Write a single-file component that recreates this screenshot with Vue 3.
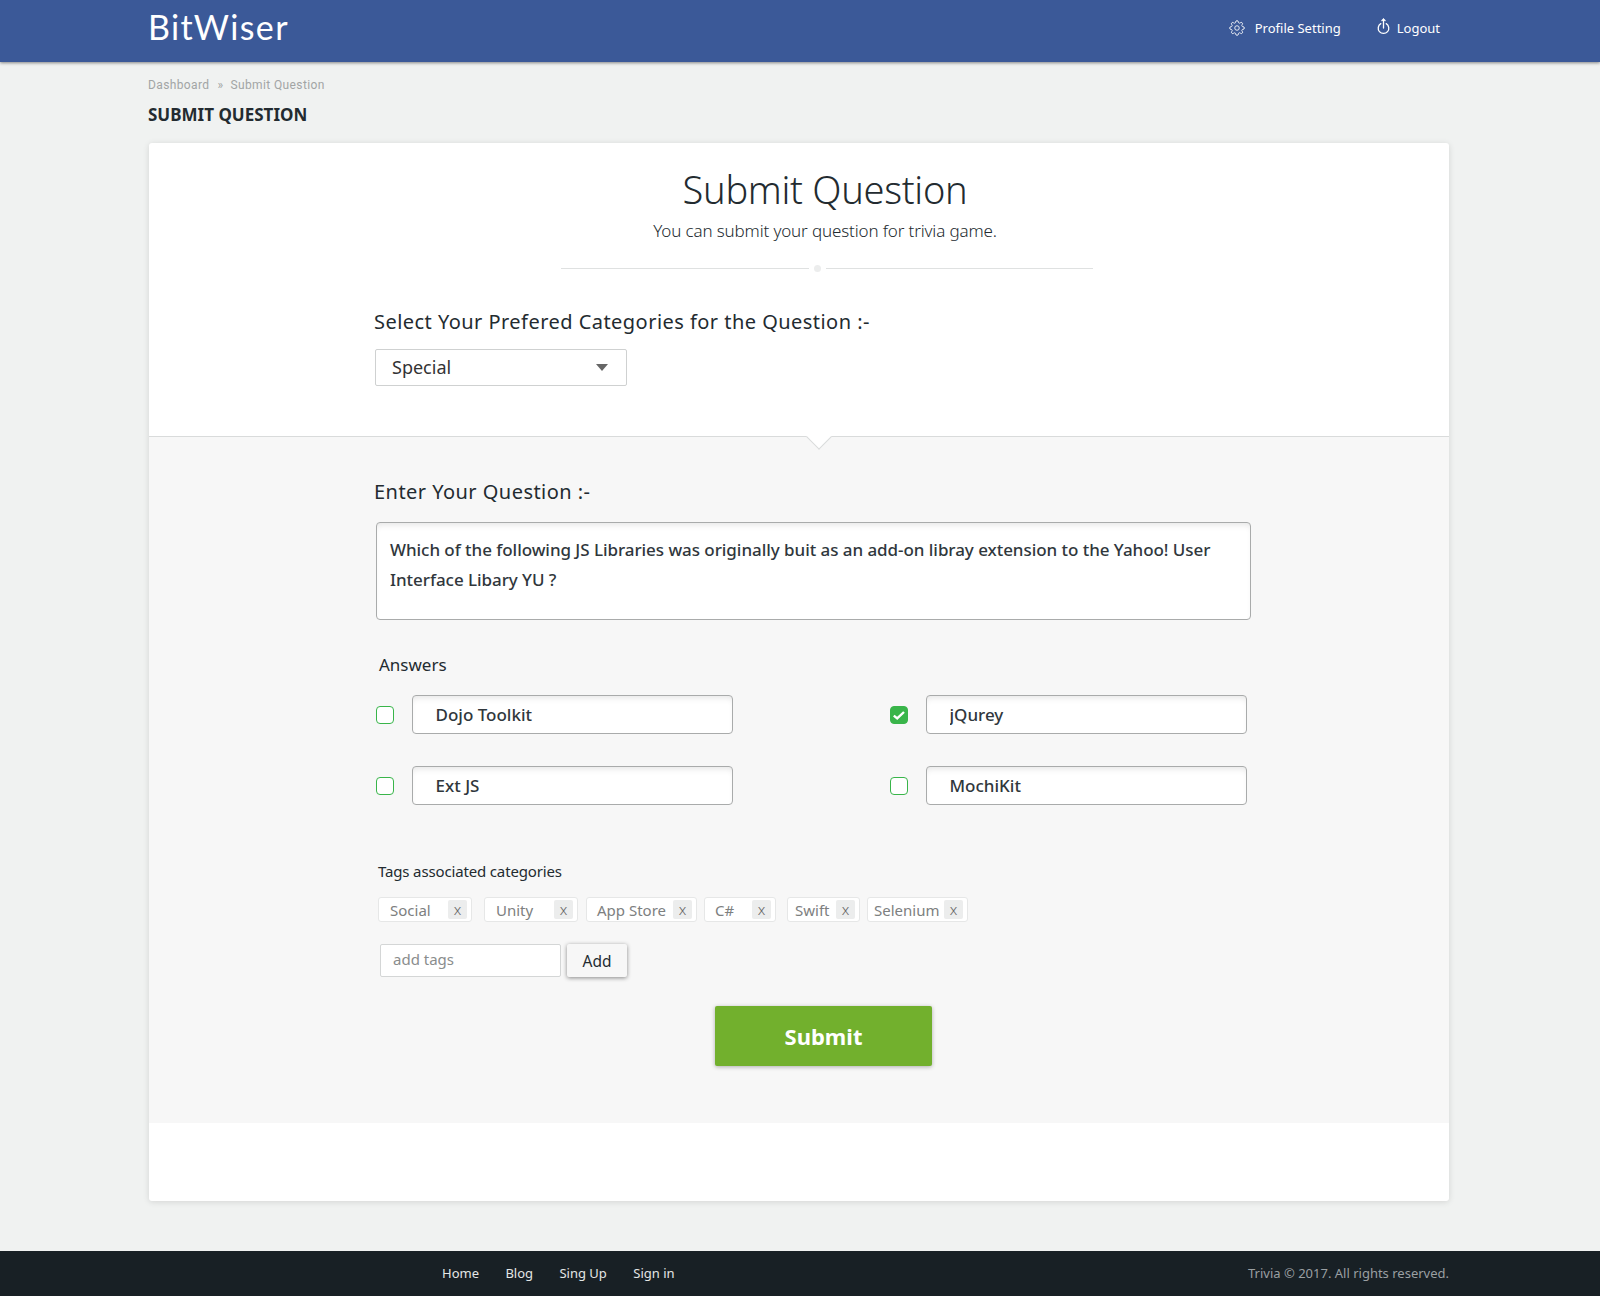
<template>
  <div class="page">
    <header class="topbar">
      <div class="wrap topbar-in">
        <div class="logo">BitWiser</div>
        <nav class="top-nav">
          <a class="nav-item">
            <svg class="gear" viewBox="0 0 24 24" fill="none" stroke="#fff" stroke-width="1.3">
              <circle cx="12" cy="12" r="3.4" />
              <path d="M19.4 15a1.65 1.65 0 0 0 .33 1.82l.06.06a2 2 0 0 1 0 2.83 2 2 0 0 1-2.83 0l-.06-.06a1.65 1.65 0 0 0-1.82-.33 1.65 1.65 0 0 0-1 1.51V21a2 2 0 0 1-2 2 2 2 0 0 1-2-2v-.09A1.65 1.65 0 0 0 9 19.4a1.65 1.65 0 0 0-1.82.33l-.06.06a2 2 0 0 1-2.83 0 2 2 0 0 1 0-2.83l.06-.06a1.65 1.65 0 0 0 .33-1.82 1.65 1.65 0 0 0-1.51-1H3a2 2 0 0 1-2-2 2 2 0 0 1 2-2h.09A1.65 1.65 0 0 0 4.6 9a1.65 1.65 0 0 0-.33-1.82l-.06-.06a2 2 0 0 1 0-2.83 2 2 0 0 1 2.83 0l.06.06a1.65 1.65 0 0 0 1.82.33H9a1.65 1.65 0 0 0 1-1.51V3a2 2 0 0 1 2-2 2 2 0 0 1 2 2v.09a1.65 1.65 0 0 0 1 1.51 1.65 1.65 0 0 0 1.82-.33l.06-.06a2 2 0 0 1 2.83 0 2 2 0 0 1 0 2.83l-.06.06a1.65 1.65 0 0 0-.33 1.82V9a1.65 1.65 0 0 0 1.51 1H21a2 2 0 0 1 2 2 2 2 0 0 1-2 2h-.09a1.65 1.65 0 0 0-1.51 1z" />
            </svg>
            Profile Setting
          </a>
          <a class="nav-item">
            <svg class="power" viewBox="0 0 13 17" fill="none" stroke="#fff" stroke-width="1.3" stroke-linecap="round">
              <path d="M3.8 5.6a5.3 5.3 0 1 0 5.4 0" />
              <path d="M6.5 10V1M4.9 2.6 6.5 1l1.6 1.6" />
            </svg>
            Logout
          </a>
        </nav>
      </div>
    </header>

    <main class="wrap content">
      <div class="crumbs">
        <span>Dashboard</span>
        <span class="sep">»</span>
        <span>Submit Question</span>
      </div>
      <h2 class="page-title">SUBMIT QUESTION</h2>

      <section class="card">
        <div class="card-top">
          <h1 class="big-title">Submit Question</h1>
          <p class="subtitle">You can submit your question for trivia game.</p>
          <div class="divider"><i></i><b></b><i></i></div>

          <div class="form-col">
            <h3 class="label">Select Your Prefered Categories for the Question :-</h3>
            <div class="select-box">
              <select class="select">
                <option>Special</option>
              </select>
            </div>
          </div>
        </div>

        <div class="card-form">
          <span class="notch"></span>
          <div class="form-col">
            <h3 class="label">Enter Your Question :-</h3>
            <textarea
              class="question"
              rows="2"
              value="Which of the following JS Libraries was originally buit as an add-on libray extension to the Yahoo! User Interface Libary YU ?"
            ></textarea>

            <div class="answers-title">Answers</div>
            <div class="answers">
              <div v-for="a in answers" :key="a.text" class="answer">
                <span class="check" :class="{ on: a.right }">
                  <svg v-if="a.right" viewBox="0 0 16 16" fill="none" stroke="#fff" stroke-width="2.4">
                    <path d="M2.8 8.6 6.2 11.4 13 5" />
                  </svg>
                </span>
                <input class="answer-input" type="text" :value="a.text" />
              </div>
            </div>

            <div class="tags-title">Tags associated categories</div>
            <div class="tags">
              <span
                v-for="t in tags"
                :key="t.name"
                class="tag"
                :style="{ width: t.w + 'px', marginRight: t.gap + 'px', paddingLeft: t.pad + 'px' }"
              >
                {{ t.name }}
                <span class="tag-x">x</span>
              </span>
            </div>
            <div class="add-row">
              <input class="add-input" type="text" placeholder="add tags" />
              <button class="add-btn" type="button">Add</button>
            </div>
            <div class="submit-row">
              <button class="submit-btn" type="button">Submit</button>
            </div>
          </div>
        </div>
        <div class="card-end"></div>
      </section>
    </main>

    <footer class="footer">
      <div class="wrap footer-in">
        <nav class="foot-nav">
          <a v-for="l in footLinks" :key="l">{{ l }}</a>
        </nav>
        <div class="copy">Trivia © 2017. All rights reserved.</div>
      </div>
    </footer>
  </div>
</template>

<script setup>
const answers = [
  { text: 'Dojo Toolkit', right: false },
  { text: 'jQurey', right: true },
  { text: 'Ext JS', right: false },
  { text: 'MochiKit', right: false }
]

// tag boxes have uneven widths in the design
const tags = [
  { name: 'Social', w: 94, gap: 12, pad: 11 },
  { name: 'Unity', w: 94, gap: 8, pad: 11 },
  { name: 'App Store', w: 111, gap: 7, pad: 10 },
  { name: 'C#', w: 72, gap: 11, pad: 10 },
  { name: 'Swift', w: 73, gap: 7, pad: 7 },
  { name: 'Selenium', w: 101, gap: 0, pad: 6 }
]

const footLinks = ['Home', 'Blog', 'Sing Up', 'Sign in']
</script>

<style>
html,
body {
  margin: 0;
  background: #f0f2f1;
}
</style>

<style scoped>
.page {
  min-height: 1296px;
  display: flex;
  flex-direction: column;
  font-family: "Noto Sans", sans-serif;
  color: #232b30;
}

.wrap {
  width: 1300px;
  margin: 0 auto;
  padding-left: 149px;
  padding-right: 151px;
  box-sizing: content-box;
}

.topbar {
  height: 62px;
  background: #3b5998;
  box-shadow: 0 1px 3px rgba(0, 0, 0, 0.45);
}

.topbar-in {
  height: 100%;
  display: flex;
  align-items: center;
  justify-content: space-between;
}

.logo {
  font-family: "Lato", sans-serif;
  font-size: 34px;
  font-weight: 400;
  color: #fff;
  letter-spacing: 1.4px;
  margin: -9px 0 0 -1px;
}

.top-nav {
  display: flex;
  align-items: center;
  margin-top: -7px;
  padding-right: 9px;
}

.nav-item {
  display: flex;
  align-items: center;
  color: #fff;
  font-size: 13px;
  margin-left: 36px;
}

.gear {
  width: 16px;
  height: 16px;
  margin-right: 10px;
}

.power {
  width: 13px;
  height: 17px;
  margin-right: 7px;
  margin-top: -3px;
}

.content {
  flex: 1;
}

.crumbs {
  margin: 15px 0 0 -1px;
  font-family: "Roboto", sans-serif;
  font-size: 12px;
  line-height: 16px;
  letter-spacing: 0.38px;
  color: #a2a5a5;
}

.sep {
  margin: 0 7px 0 8px;
}

.page-title {
  margin: 10px 0 0 -1px;
  font-size: 17px;
  line-height: 23px;
  font-weight: 700;
  color: #232b30;
}

.card {
  margin-top: 17px;
  background: #fff;
  border-radius: 3px;
  box-shadow: 0 1px 6px rgba(0, 0, 0, 0.12);
}

.card-top {
  height: 293px;
  padding-top: 22px;
  box-sizing: border-box;
  text-align: center;
}

.big-title {
  margin: 0;
  padding-left: 52px;
  font-size: 38px;
  line-height: 48px;
  font-weight: 300;
  letter-spacing: -0.3px;
  color: #232b30;
}

.subtitle {
  margin: 5px 0 0;
  padding-left: 52px;
  font-size: 17px;
  line-height: 26px;
  font-weight: 300;
  letter-spacing: -0.14px;
}

.divider {
  display: flex;
  align-items: center;
  width: 532px;
  margin: 21px 0 0 412px;
}

.divider i {
  flex: 1;
  height: 1px;
  background: #dfe1e1;
}

.divider i:first-child {
  flex: 0 0 248px;
}

.divider b {
  width: 7px;
  height: 7px;
  margin: 0 5px;
  border-radius: 50%;
  background: #eceded;
}

.form-col {
  margin-left: 225px;
  width: 880px;
  text-align: left;
}

.card-top .form-col {
  margin-top: 36px;
}

.label {
  margin: 0;
  font-size: 20px;
  line-height: 28px;
  font-weight: 400;
  letter-spacing: 0.46px;
}

.select-box {
  position: relative;
  margin: 13px 0 0 1px;
  width: 252px;
}

.select-box::after {
  content: "";
  position: absolute;
  right: 19px;
  top: 15px;
  border-left: 6.5px solid transparent;
  border-right: 6.5px solid transparent;
  border-top: 7px solid #666;
}

.select {
  appearance: none;
  display: block;
  width: 100%;
  height: 37px;
  padding: 0 16px 2px;
  border: 1px solid #cfd1d1;
  border-radius: 2px;
  background: #fff;
  font-family: inherit;
  font-size: 18px;
  color: #333;
}

.card-form {
  position: relative;
  height: 687px;
  box-sizing: border-box;
  padding-top: 41px;
  background: #f7f7f7;
  border-top: 1px solid #d9dbdb;
}

.notch {
  position: absolute;
  left: 661px;
  top: -9px;
  width: 17px;
  height: 17px;
  background: #fff;
  border-right: 1px solid #d9dbdb;
  border-bottom: 1px solid #d9dbdb;
  transform: rotate(45deg);
}

.question {
  display: block;
  width: 875px;
  height: 98px;
  margin: 16px 0 0 2px;
  padding: 12px 13px;
  box-sizing: border-box;
  border: 1px solid #a9abab;
  border-radius: 4px;
  background: #fff;
  box-shadow: inset 0 5px 6px -3px rgba(0, 0, 0, 0.1);
  font-family: inherit;
  font-size: 17px;
  line-height: 30px;
  font-weight: 500;
  letter-spacing: -0.05px;
  color: #30373c;
  resize: none;
  overflow: hidden;
}

.answers-title {
  margin: 31px 0 0 5px;
  font-size: 17px;
  line-height: 28px;
  font-weight: 400;
}

.answers {
  display: grid;
  grid-template-columns: 514px 360px;
  row-gap: 32px;
  margin: 16px 0 0 2px;
}

.answer {
  display: flex;
  align-items: center;
}

.check {
  flex: none;
  width: 18px;
  height: 18px;
  box-sizing: border-box;
  border: 1px solid #39b54a;
  border-radius: 4px;
  background: #fff;
}

.check.on {
  background: #39b54a;
}

.check svg {
  display: block;
  width: 16px;
  height: 16px;
}

.answer-input {
  width: 321px;
  height: 39px;
  margin-left: 18px;
  padding: 0 22.5px;
  box-sizing: border-box;
  border: 1px solid #a9abab;
  border-radius: 4px;
  background: #fff;
  box-shadow: inset 0 5px 6px -3px rgba(0, 0, 0, 0.1);
  font-family: inherit;
  font-size: 17px;
  font-weight: 500;
  color: #30373c;
}

.tags-title {
  margin: 54px 0 0 4px;
  font-size: 15px;
  line-height: 24px;
  letter-spacing: -0.15px;
}

.tags {
  display: flex;
  margin: 14px 0 0 4px;
}

.tag {
  display: flex;
  align-items: center;
  justify-content: space-between;
  box-sizing: border-box;
  height: 25px;
  padding-right: 4px;
  border: 1px solid #e6e7e7;
  border-radius: 3px;
  background: #fff;
  font-size: 15px;
  color: #7d8080;
}

.tag-x {
  width: 19px;
  height: 19px;
  border-radius: 2px;
  background: #eceded;
  text-align: center;
  font-size: 15px;
  font-weight: 300;
  line-height: 18px;
  color: #666;
}

.add-row {
  display: flex;
  margin: 22px 0 0 6px;
}

.add-input {
  width: 181px;
  height: 33px;
  padding: 0 12px 4px;
  box-sizing: border-box;
  border: 1px solid #d4d6d6;
  border-radius: 2px;
  background: #fff;
  font-family: inherit;
  font-size: 15px;
}

.add-input::placeholder {
  color: #8a8d8d;
}

.add-btn {
  width: 60px;
  height: 33px;
  margin-left: 6px;
  border: none;
  border-radius: 2px;
  background: #f7f7f7;
  box-shadow: 0 1px 4px rgba(0, 0, 0, 0.45);
  font-family: inherit;
  font-size: 15.5px;
  color: #232b30;
}

.submit-row {
  margin: 29px 0 0 341px;
}

.submit-btn {
  display: block;
  width: 217px;
  height: 60px;
  border: none;
  border-radius: 2px;
  background: #72b02d;
  box-shadow: 0 1px 4px rgba(0, 0, 0, 0.3);
  font-family: inherit;
  font-size: 22px;
  font-weight: 700;
  color: #fff;
}

.card-end {
  height: 78px;
}

.footer {
  margin-top: 50px;
  height: 45px;
  background: #182025;
}

.footer-in {
  display: flex;
  align-items: center;
  justify-content: space-between;
  padding-bottom: 2px;
  height: 43px;
  font-size: 13px;
}

.foot-nav {
  display: flex;
  gap: 26.4px;
  margin-left: 293px;
  color: #e4e6e6;
}

.copy {
  color: #9a9fa2;
}
</style>
